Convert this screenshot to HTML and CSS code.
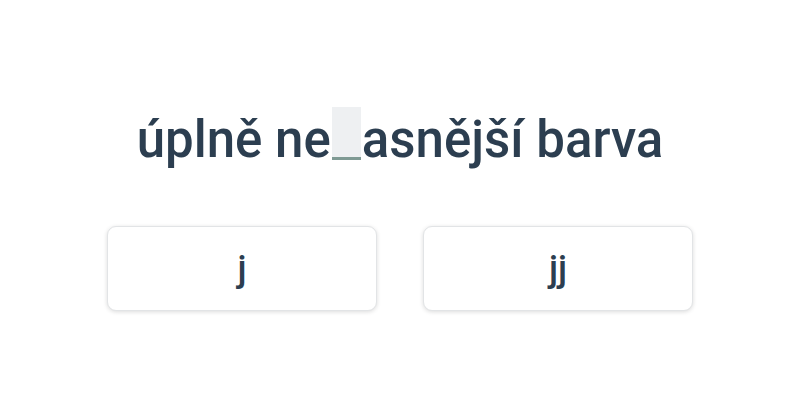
FILE: index.html
```html
<!DOCTYPE html>
<html lang="cs">
<head>
<meta charset="utf-8">
<link rel="stylesheet" href="styles.css">
</head>
<body>
<main class="quiz">
  <h1 class="prompt">úplně ne<span class="blank"></span>asnější barva</h1>
  <div class="choices">
    <button class="choice">j</button>
    <button class="choice">jj</button>
  </div>
</main>
</body>
</html>
```
FILE: styles.css
```css
html, body {
  margin: 0;
  padding: 0;
  background: #ffffff;
}
body {
  font-family: Roboto, "Liberation Sans", sans-serif;
  color: #2c3e50;
}
.quiz {
  width: 800px;
  height: 400px;
  display: flex;
  flex-direction: column;
  align-items: center;
  padding-top: 105px;
  box-sizing: border-box;
}
.prompt {
  margin: 0;
  font-size: 51px;
  font-weight: 500;
  line-height: 70px;
  height: 70px;
  white-space: pre;
}
.blank {
  display: inline-block;
  width: 29px;
  height: 53px;
  background: #eef0f2;
  border-bottom: 3px solid #7f9a94;
  margin: 0 1px;
  vertical-align: -3px;
  box-sizing: border-box;
}
.choices {
  display: flex;
  gap: 46px;
  margin-top: 51px;
}
.choice {
  width: 270px;
  height: 85px;
  background: #ffffff;
  border: 1px solid #e2e4e6;
  border-radius: 9px;
  box-shadow: 0 1px 4px rgba(0, 0, 0, 0.14);
  font-family: Roboto, "Liberation Sans", sans-serif;
  font-size: 36px;
  font-weight: 500;
  color: #2c3e50;
  padding: 0;
  cursor: pointer;
}
```
